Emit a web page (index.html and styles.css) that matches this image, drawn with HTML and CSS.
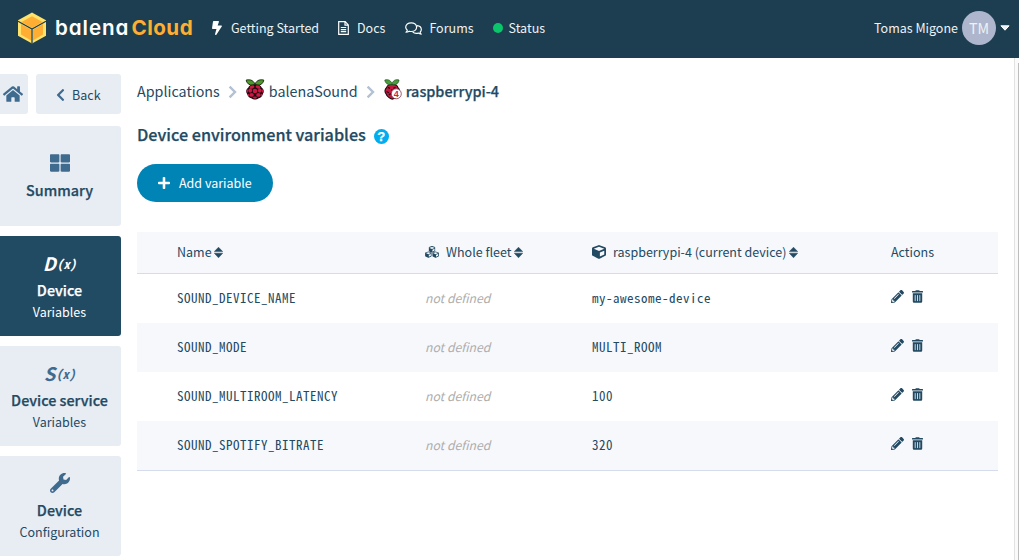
FILE: index.html
```
<!DOCTYPE html>
<html lang="en">
<head>
<meta charset="utf-8">
<title>balenaCloud - Device environment variables</title>
<link rel="stylesheet" href="styles.css">
</head>
<body>
<svg class="sprite" aria-hidden="true">
  <symbol id="sort" viewBox="0 0 9 11"><path d="M4.5 0.2 8.7 4.6H.3zM4.5 10.8 8.7 6.2H.3z" stroke="currentColor" stroke-width=".5" stroke-linejoin="round"/></symbol>
  <symbol id="cube" viewBox="0 0 512 512"><path d="M239.1 6.3l-208 78c-18.7 7-31.1 25-31.1 45v225.1c0 18.2 10.3 34.8 26.5 42.9l208 104c13.5 6.8 29.4 6.8 42.9 0l208-104c16.3-8.1 26.5-24.8 26.5-42.9V129.3c0-20-12.4-37.9-31.1-44.9l-208-78C262 2.2 250 2.2 239.1 6.3zM256 68.4l192 72v1.1l-192 78-192-78v-1.1l192-72zm32 356V275.5l160-65v133.9l-160 80z"/></symbol>
  <symbol id="pencil" viewBox="0 0 512 512"><path d="M497.9 142.1l-46.1 46.1c-4.7 4.7-12.3 4.7-17 0l-111-111c-4.7-4.7-4.7-12.3 0-17l46.1-46.1c18.7-18.7 49.1-18.7 67.9 0l60.1 60.1c18.8 18.7 18.8 49.1 0 67.9zM284.2 99.8L21.6 362.4.4 483.9c-2.9 16.4 11.4 30.6 27.8 27.8l121.5-21.3 262.6-262.6c4.7-4.7 4.7-12.3 0-17l-111-111c-4.8-4.7-12.4-4.7-17.1 0zM124.1 339.9c-5.5-5.5-5.5-14.3 0-19.8l154-154c5.5-5.5 14.3-5.5 19.8 0s5.5 14.3 0 19.8l-154 154c-5.5 5.5-14.3 5.5-19.8 0zM88 424h48v36.3l-64.5 11.3-31.1-31.1L51.700 376H88v48z"/></symbol>
  <symbol id="trash" viewBox="0 0 448 512"><path d="M32 464a48 48 0 0 0 48 48h288a48 48 0 0 0 48-48V128H32zm272-256a16 16 0 0 1 32 0v224a16 16 0 0 1-32 0zm-96 0a16 16 0 0 1 32 0v224a16 16 0 0 1-32 0zm-96 0a16 16 0 0 1 32 0v224a16 16 0 0 1-32 0zM432 32H312l-9.4-18.7A24 24 0 0 0 281.1 0H166.8a23.72 23.72 0 0 0-21.4 13.3L136 32H16A16 16 0 0 0 0 48v32a16 16 0 0 0 16 16h416a16 16 0 0 0 16-16V48a16 16 0 0 0-16-16z"/></symbol>
  <symbol id="sep" viewBox="0 0 9 14"><path d="M1.6 1.6 7 7 1.6 12.4" fill="none" stroke="#b3c1d3" stroke-width="2.4"/></symbol>
  <symbol id="berry" viewBox="0 0 20 21">
    <path d="M10 5C8 .6 4 .3 1.200 1.100 1.600 4 4 6.400 8 6.400L10 6l2 .4c4 0 6.400-2.400 6.800-5.300C16 .3 12 .6 10 5z" fill="#4c9a2a" stroke="#16220f" stroke-width=".9"/>
    <path d="M10 5.300c3.200 0 6 1 7 3.700 1.800 1 2.400 4 .9 6-.6 2.700-2.900 4.200-4.700 4.500-1.500 1.300-4.900 1.300-6.400 0C5 19.200 2.700 17.700 2.100 15 .6 13 1.200 10 3 9c1-2.700 3.800-3.700 7-3.700z" fill="#1b0a10"/>
    <g fill="#cf1743"><ellipse cx="7" cy="8" rx="2.500" ry="1.600" transform="rotate(-22 7 8)"/><ellipse cx="13" cy="8" rx="2.500" ry="1.600" transform="rotate(22 13 8)"/><circle cx="10" cy="12" r="2.300"/><ellipse cx="5.200" cy="11.600" rx="1.900" ry="2.100"/><ellipse cx="14.800" cy="11.600" rx="1.900" ry="2.100"/><ellipse cx="6.600" cy="15.900" rx="2.200" ry="1.900"/><ellipse cx="13.400" cy="15.900" rx="2.200" ry="1.900"/><ellipse cx="10" cy="18.600" rx="2" ry="1.100"/><ellipse cx="2.300" cy="12" rx=".7" ry="1.700"/><ellipse cx="17.700" cy="12" rx=".7" ry="1.700"/><ellipse cx="3.500" cy="16" rx=".7" ry="1.300" transform="rotate(-25 3.500 16)"/><ellipse cx="16.500" cy="16" rx=".7" ry="1.300" transform="rotate(25 16.500 16)"/></g>
  </symbol>
</svg>

<header class="topbar">
  <a class="logo">
    <svg width="30" height="32" viewBox="0 0 30 32">
      <path d="M15 .5 29 8.300v15.400L15 31.500 1 23.700V8.300z" fill="#ffe26a"/>
      <path d="M15 4.200 25.500 10 15 16 4.500 10z" fill="#ffae33"/>
      <path d="M4 12 14 17.800v10.600L4 22.500zM26 12 16 17.800v10.600l10-5.900z" fill="#ffae33"/>
      <path d="M1 9.200 15 17l14-7.800M15 17v14.500" fill="none" stroke="#1b3d50" stroke-width="1.300"/>
    </svg>
    <span class="brand">balena</span><span class="brand cloud">Cloud</span>
  </a>
  <nav class="links">
    <a class="link l1"><svg width="10" height="14" viewBox="0 0 320 512" preserveAspectRatio="none"><path d="M296 160H180.600l42.600-129.800C227.200 15 215.700 0 200 0H56C44 0 33.800 8.900 32.200 20.800l-32 240C-1.700 275.200 9.500 288 24 288h118.700L96.600 482.500c-3.600 15.200 8 29.500 23.300 29.500 8.400 0 16.400-4.400 20.800-12l176-304c9.300-15.900-2.200-36-20.700-36z"/></svg>Getting Started</a>
    <a class="link l2"><svg width="11" height="14" viewBox="0 0 11 14" class="line"><path d="M1.400.7h5.800l3.100 3.200v9.400H.7V.7zM7 .9v3.200h3.200M2.800 6.500h5.400M2.800 8.600h5.400M2.800 10.700h5.400"/></svg>Docs</a>
    <a class="link l3"><svg width="17" height="13" viewBox="0 0 17 13" class="line"><path d="M1 10.200c.9-.7 1.200-1.200 1.300-2C1.300 7.400.7 6.400.7 5.200.7 2.700 3.100.8 6.200.8s5.400 1.900 5.400 4.400-2.300 4.300-5.400 4.300c-.8 0-1.400-.1-2-.3-.9.600-2 1-3.200 1zM12 3.700c2.500.2 4.300 1.700 4.300 3.900 0 1.100-.4 2-1.200 2.700.1.700.5 1.200 1.100 1.800-1.200 0-2.100-.4-2.900-1-2.200.5-4.400.1-5.600-1.300" stroke-linejoin="round"/></svg>Forums</a>
    <a class="link l4"><i class="dot"></i>Status</a>
  </nav>
  <div class="user"><span>Tomas Migone</span><span class="avatar">TM</span><svg width="10" height="6" viewBox="0 0 10 6"><path d="M.9.800h8.200L5 5.200z" stroke="#fff" stroke-linejoin="round"/></svg></div>
</header>

<div class="body">
  <aside class="side">
    <div class="siderow">
      <a class="home"><svg width="20" height="18" viewBox="0 0 576 512"><path d="M280.370 148.260L96 300.110V464a16 16 0 0 0 16 16l112.060-.29a16 16 0 0 0 15.920-16V368a16 16 0 0 1 16-16h64a16 16 0 0 1 16 16v95.640a16 16 0 0 0 16 16.050L464 480a16 16 0 0 0 16-16V300L295.670 148.260a12.190 12.190 0 0 0-15.300 0zM571.600 251.470L488 182.560V44.050a12 12 0 0 0-12-12h-56a12 12 0 0 0-12 12v72.610L318.470 43a48 48 0 0 0-61 0L4.340 251.470a12 12 0 0 0-1.600 16.900l25.500 31A12 12 0 0 0 45.150 301l235.220-193.740a12.190 12.190 0 0 1 15.300 0L530.900 301a12 12 0 0 0 16.900-1.600l25.500-31a12 12 0 0 0-1.700-16.930z"/></svg></a>
      <a class="back"><svg width="9" height="14" viewBox="0 0 320 512"><path d="M34.520 239.030L228.870 44.690c9.370-9.370 24.570-9.370 33.940 0l22.670 22.670c9.360 9.360 9.370 24.520.04 33.900L131.490 256l154.020 154.750c9.340 9.380 9.320 24.540-.04 33.900l-22.670 22.670c-9.370 9.370-24.570 9.370-33.940 0L34.520 272.970c-9.370-9.370-9.370-24.570 0-33.940z"/></svg><span>Back</span></a>
    </div>
    <a class="tile summary"><span class="ico"><svg width="20" height="20" viewBox="0 0 512 512"><path d="M296 32h192c13.255 0 24 10.745 24 24v160c0 13.255-10.745 24-24 24H296c-13.255 0-24-10.745-24-24V56c0-13.255 10.745-24 24-24zm-80 0H24C10.745 32 0 42.745 0 56v160c0 13.255 10.745 24 24 24h192c13.255 0 24-10.745 24-24V56c0-13.255-10.745-24-24-24zM0 296v160c0 13.255 10.745 24 24 24h192c13.255 0 24-10.745 24-24V296c0-13.255-10.745-24-24-24H24c-13.255 0-24 10.745-24 24zm296 184h192c13.255 0 24-10.745 24-24V296c0-13.255-10.745-24-24-24H296c-13.255 0-24 10.745-24 24v160c0 13.255 10.745 24 24 24z"/></svg></span><b>Summary</b></a>
    <a class="tile active"><span class="ico fx"><span class="big">D</span><span class="small">(x)</span></span><b>Device</b><span class="sub">Variables</span></a>
    <a class="tile"><span class="ico fx"><span class="big">S</span><span class="small">(x)</span></span><b>Device service</b><span class="sub">Variables</span></a>
    <a class="tile"><span class="ico"><svg width="20" height="20" viewBox="0 0 512 512"><path d="M507.730 109.100c-2.240-9.030-13.540-12.090-20.120-5.510l-74.360 74.360-67.880-11.310-11.310-67.880 74.360-74.360c6.620-6.620 3.430-17.900-5.660-20.160-47.380-11.740-99.550.91-136.580 37.930-39.640 39.640-50.550 97.100-34.050 147.200L18.740 402.760c-24.990 24.990-24.990 65.510 0 90.500 24.990 24.990 65.510 24.990 90.500 0l213.210-213.210c50.120 16.710 107.470 5.680 147.370-34.220 37.070-37.070 49.700-89.320 37.910-136.730zM64 472c-13.250 0-24-10.750-24-24 0-13.260 10.750-24 24-24s24 10.740 24 24c0 13.250-10.750 24-24 24z"/></svg></span><b>Device</b><span class="sub">Configuration</span></a>
  </aside>

  <main class="main">
    <div class="crumbs">
      <span>Applications</span>
      <svg class="sep" width="9" height="14"><use href="#sep"/></svg>
      <svg class="pi" width="20" height="21"><use href="#berry"/></svg>
      <span>balenaSound</span>
      <svg class="sep" width="9" height="14"><use href="#sep"/></svg>
      <svg class="pi four" width="20" height="21" viewBox="0 0 20 21">
        <path d="M9 5.200c3 0 5.500 1 6 3.600 1.600 1 2 4 .8 6-.6 2.600-2.600 4-4.200 4.400-1.400 1.200-3.600 1-5-.3C5 18 3.400 16.700 2.800 14.400 1.400 12.600 2 9.800 3.500 8.800 4.200 6.400 6.400 5.200 9 5.200z" fill="#c4183f" stroke="#1b0a10" stroke-width="1.100"/>
        <path d="M9 4.500C7.300.6 4.500.3 1.800 1c.3 2.600 2.200 4.800 5.600 4.800L9 5.400l1.600.4C14 5.800 15.800 3.600 16 1c-2.600-.7-5.300-.4-7 3.500z" fill="#4a9f3c" stroke="#1c4a1c" stroke-width=".7"/>
        <path d="M5 8.400l2 1M12.500 8.400l-2 1M3.600 12.500l2.200 1.200M6 16l1.700-1.400M8.800 10.500v1" stroke="#1b0a10" stroke-width="1.300"/>
        <circle cx="13.300" cy="14.800" r="5" fill="#fff" stroke="#8c3348" stroke-width=".8"/>
        <text x="13.300" y="18.200" text-anchor="middle" class="num">4</text>
      </svg>
      <span class="semi">raspberrypi-4</span>
    </div>
    <h1 class="title"><span>Device environment variables</span><i class="help">?</i></h1>
    <button class="add"><svg width="12" height="14" viewBox="0 0 448 512"><path d="M416 208H272V64c0-17.670-14.330-32-32-32h-32c-17.670 0-32 14.330-32 32v144H32c-17.670 0-32 14.330-32 32v32c0 17.670 14.330 32 32 32h144v144c0 17.670 14.330 32 32 32h32c17.670 0 32-14.330 32-32V304h144c17.670 0 32-14.330 32-32v-32c0-17.670-14.330-32-32-32z"/></svg><span>Add variable</span></button>

    <div class="table">
      <div class="row head">
        <span class="th">Name<svg class="sort" width="9" height="11"><use href="#sort"/></svg></span>
        <span class="th"><svg class="lead" width="14" height="12" viewBox="0 0 14 12"><use href="#cube" x="3.600" y="0" width="6.800" height="6.800"/><use href="#cube" x="0" y="5.300" width="6.800" height="6.600"/><use href="#cube" x="7.200" y="5.300" width="6.800" height="6.600"/></svg>Whole fleet<svg class="sort" width="9" height="11"><use href="#sort"/></svg></span>
        <span class="th"><svg class="lead" width="14" height="14"><use href="#cube"/></svg>raspberrypi-4 (current device)<svg class="sort" width="9" height="11"><use href="#sort"/></svg></span>
        <span class="th">Actions</span>
      </div>
      <div class="row"><code>SOUND_DEVICE_NAME</code><em>not defined</em><code>my-awesome-device</code><span class="acts"><svg width="13" height="13"><use href="#pencil"/></svg><svg width="11" height="13"><use href="#trash"/></svg></span></div>
      <div class="row alt"><code>SOUND_MODE</code><em>not defined</em><code>MULTI_ROOM</code><span class="acts"><svg width="13" height="13"><use href="#pencil"/></svg><svg width="11" height="13"><use href="#trash"/></svg></span></div>
      <div class="row"><code>SOUND_MULTIROOM_LATENCY</code><em>not defined</em><code>100</code><span class="acts"><svg width="13" height="13"><use href="#pencil"/></svg><svg width="11" height="13"><use href="#trash"/></svg></span></div>
      <div class="row alt"><code>SOUND_SPOTIFY_BITRATE</code><em>not defined</em><code>320</code><span class="acts"><svg width="13" height="13"><use href="#pencil"/></svg><svg width="11" height="13"><use href="#trash"/></svg></span></div>
    </div>
  </main>
  <div class="scrollbar"><div class="thumb"></div></div>
</div>
</body>
</html>
```

FILE: styles.css
```
* { box-sizing: border-box; }
html, body { height: 560px; overflow: hidden; }
body {
  margin: 0;
  background: #fff;
  color: #234a63;
  font: 12.5px/18px "Noto Sans CJK SC", "Open Sans", sans-serif;
  white-space: nowrap;
}
svg { display: block; flex: none; fill: currentColor; }
.sprite { position: absolute; width: 0; height: 0; }

.topbar {
  display: flex;
  align-items: center;
  height: 58px;
  padding: 0 9px 2px 17px;
  background: #1c3e50;
  color: #fff;
}
.logo { display: flex; align-items: center; width: 195px; }
.brand {
  margin-left: 8px;
  font: 600 20.6px/26px Inter, sans-serif;
  font-feature-settings: "cv11";
  letter-spacing: 0.95px;
}
.cloud { margin-left: 2px; letter-spacing: 0.5px; font-weight: 700; color: #ffae33; }
.links { display: flex; }
.link { display: flex; align-items: center; color: #eef2f5; }
.link svg { color: #fff; }
.link .line, .line { fill: none; stroke: currentColor; stroke-width: 1.2; }
.l1 { gap: 9px; width: 107px; }
.l2 { gap: 8px; margin-left: 19px; }
.l3 { gap: 7px; margin-left: 20px; }
.l4 { gap: 6px; margin-left: 19px; }
.dot { width: 10px; height: 10px; border-radius: 50%; background: #0bc56b; }
.user { display: flex; align-items: center; margin-left: auto; color: #eef2f5; }
.avatar {
  width: 34px;
  height: 34px;
  margin: 0 4px;
  border-radius: 50%;
  background: #adb6cc;
  font-size: 14.3px;
  line-height: 33px;
  text-align: center;
}

.body { display: flex; height: 502px; overflow: hidden; }
.side { display: flex; flex-direction: column; gap: 10px; width: 121px; padding-top: 16px; }
.siderow { display: flex; gap: 8px; height: 42px; padding-bottom: 2px; }
.home, .back, .tile { background: #e8ecf3; }
.home { display: flex; align-items: center; width: 28px; padding-left: 3px; border-radius: 0 3px 3px 0; color: #3f6b8f; }
.back { display: flex; flex: 1; align-items: center; padding: 2px 0 0 20px; gap: 7px; border-radius: 3px; }
.back svg { color: #3f6b8f; }
.tile {
  display: flex;
  flex: none;
  flex-direction: column;
  align-items: center;
  height: 100px;
  padding: 13px 2px 0 0;
  border-radius: 0 3px 3px 0;
}
.tile b, .semi, .title { font-weight: 500; -webkit-text-stroke: 0.25px currentColor; }
.tile b { font-size: 14.35px; line-height: 24px; }
.tile .sub { line-height: 20px; }
.ico { display: flex; align-items: center; height: 28px; margin-bottom: 1px; color: #3f6b8f; }
.summary { padding-top: 23px; }
.active { background: #214a63; color: #fff; }
.active .ico { color: #fff; }
.fx { gap: 1px; font-family: "Noto Sans Mono CJK SC", "Noto Sans CJK SC", monospace; font-style: italic; font-weight: 700; }
.big { font-size: 18.5px; font-family: "Noto Sans CJK SC", sans-serif; }
.small { padding-top: 1px; font-size: 12.5px; letter-spacing: 0.1px; }

.main { flex: none; width: 861px; margin-left: 16px; padding-top: 21px; }
.crumbs { display: flex; align-items: center; height: 24px; font-size: 14.3px; line-height: 24px; }
.sep { margin: 2px 8px 0; }
.pi { margin: -4px 4px 0 0; }
.four { margin-right: 3px; }
.semi { font-size: 14.4px; }
.num { font: 700 9px "Liberation Sans", sans-serif; fill: #d0214a; }
.title { display: flex; align-items: center; gap: 8px; height: 24px; margin: 19px 0 0; font-size: 16.2px; line-height: 24px; }
.help {
  width: 15px;
  height: 15px;
  margin-top: 4px;
  border-radius: 50%;
  background: #00aeef;
  color: #fff;
  font: 700 13px/15px "Liberation Sans", sans-serif;
  text-align: center;
}
.add {
  display: flex;
  align-items: center;
  gap: 9px;
  width: 136px;
  height: 38px;
  margin: 18px 0 30px;
  padding: 0 0 0 21px;
  border: 0;
  border-radius: 19px;
  background: #0083b5;
  color: #fff;
  font: inherit;
}
.table { border-bottom: 1px solid #d5dcec; }
.row {
  display: grid;
  grid-template-columns: 248px 167px 299px 1fr;
  align-items: center;
  height: 49px;
  padding: 0 0 2px 40px;
}
.head { height: 42px; border-bottom: 1px solid #d5dcec; }
.head, .alt { background: #f7f8fc; }
.th { display: flex; align-items: center; }
.sort { margin: 1px 0 0 2px; }
.th:nth-child(n + 2) .sort { margin-left: 3px; }
.lead { margin-right: 7px; }
.row code { font: 13px/20px "Noto Sans Mono CJK SC", "Liberation Mono", monospace; letter-spacing: 0.5px; }
.row em { font-size: 12.2px; color: #adadad; }
.acts { display: flex; gap: 8px; margin-bottom: 3px; }

.scrollbar { width: 5px; margin-left: auto; padding-top: 5px; border-left: 1px solid #e2e2e2; background: #fafafa; }
.thumb { width: 1px; height: 100%; margin-left: auto; background: #bdbdbd; }
```
